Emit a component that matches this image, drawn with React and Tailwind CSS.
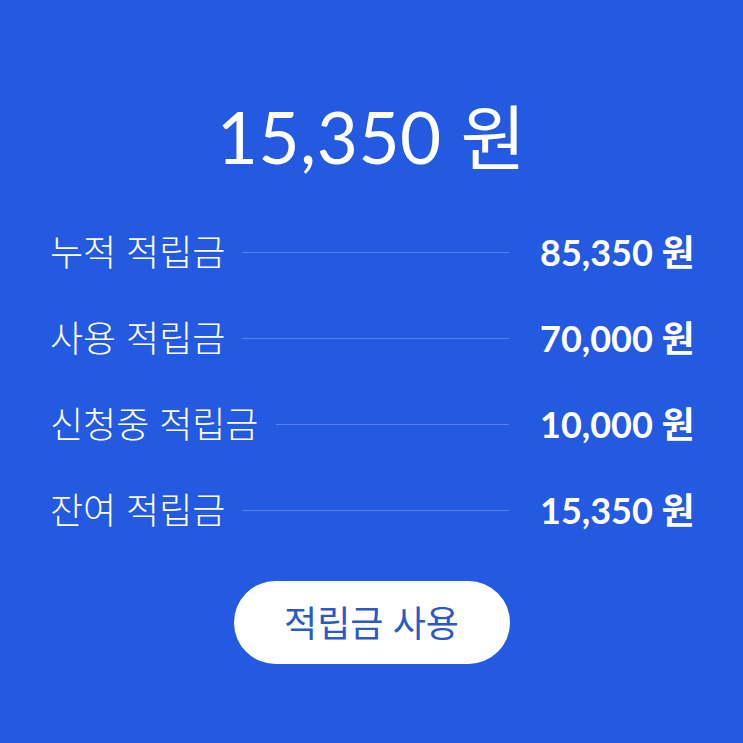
import React from "react";

const rows = [
  { label: "누적 적립금", value: "85,350" },
  { label: "사용 적립금", value: "70,000" },
  { label: "신청중 적립금", value: "10,000" },
  { label: "잔여 적립금", value: "15,350" },
];

const font = { fontFamily: '"Lato", "Noto Sans CJK KR", sans-serif' };

const App = () => {
  return (
    <div
      className="w-[743px] h-[743px] bg-[#235ae1] text-white flex flex-col items-center"
      style={font}
    >
      {/* Balance */}
      <h1 className="mt-[97px] text-[71px] leading-[80px] font-normal tracking-[0.5px]">
        15,350 원
      </h1>

      {/* Breakdown */}
      <div className="mt-[32px] w-full px-[50px] flex flex-col">
        {rows.map((row) => (
          <div key={row.label} className="h-[86px] flex items-center">
            <span className="text-[36px] font-light whitespace-nowrap">
              {row.label}
            </span>
            <span className="flex-1 h-px bg-[#5383eb] ml-[17px] mr-[31px]"></span>
            <span className="text-[36px] font-bold whitespace-nowrap text-right w-[153px]">
              {row.value} 원
            </span>
          </div>
        ))}
      </div>

      <button className="mt-[28px] w-[276px] h-[83px] rounded-full bg-white text-[#2b59c6] text-[36px] font-normal">
        적립금 사용
      </button>
    </div>
  );
};

export default App;
